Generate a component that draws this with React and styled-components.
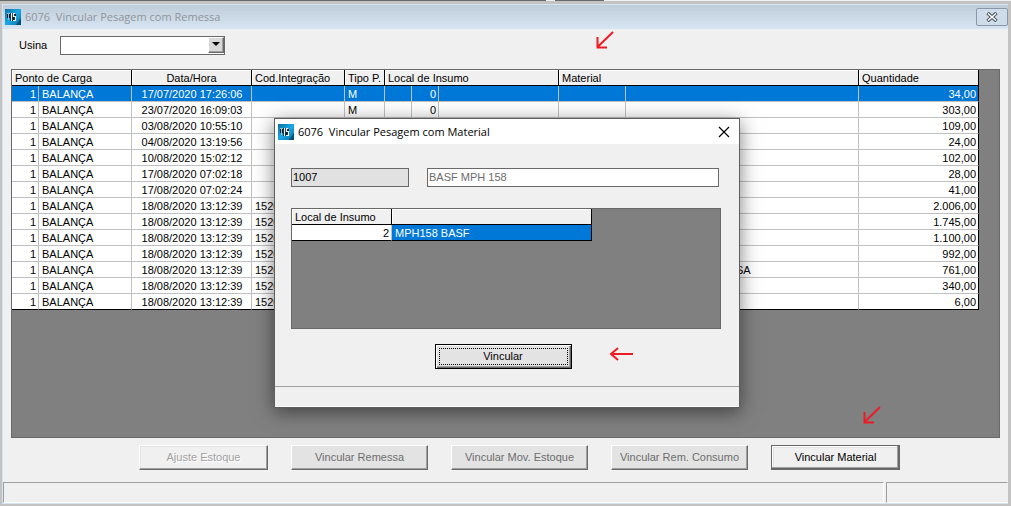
import React from "react";
import styled, { createGlobalStyle, css } from "styled-components";

const GlobalStyle = createGlobalStyle`
  * {
    box-sizing: border-box;
  }

  body {
    margin: 0;
    background: #c3c3c3;
    color: #000;
    font-family: "Liberation Sans", Arial, sans-serif;
    font-size: 11px;
    line-height: 13px;
  }
`;

const Desktop = styled.div`
  position: relative;
  display: flex;
  flex-direction: column;
  min-height: 100vh;
  padding: 0 3px 2px 2px;
`;

const Backdrop = styled.div`
  height: 4px;
  margin: 0 -3px 0 -2px;
  background:
    linear-gradient(#696969, #696969) 0 0 / 546px 1px no-repeat,
    linear-gradient(#696969, #696969) 555px 0 / 49px 1px no-repeat,
    linear-gradient(#f0f0f0, #f0f0f0) 0 0 / 100% 1px no-repeat,
    #c3c3c3;
`;

const Window = styled.main`
  flex: 1;
  display: flex;
  flex-direction: column;
  border: solid #d7e4f2;
  border-width: 1px 0 1px 1px;
  background: #f0f0f0;
`;

const TitleBar = styled.header`
  display: flex;
  align-items: center;
  gap: 4px;
  height: 24px;
  padding: 0 0 0 2px;
  background: linear-gradient(#bfcddb, #d7e4f2);
`;

const Title = styled.h1`
  flex: 1;
  margin: 0;
  font-family: "Open Sans", "Noto Sans", sans-serif;
  font-size: 11px;
  font-weight: 400;
  line-height: 16px;
  white-space: pre;
  color: ${(props) => (props.$active ? "#000" : "#8f959b")};
`;

const WindowClose = styled.button`
  display: flex;
  align-items: center;
  justify-content: center;
  width: 32px;
  height: 18px;
  padding: 0;
  border: 1px solid #8a97ab;
  border-radius: 2px;
  background: #cfdcea;
`;

const Filter = styled.div`
  display: flex;
  align-items: center;
  gap: 13px;
  height: 40px;
  padding: 0 16px 7px;
`;

const Combo = styled.div`
  position: relative;
  display: flex;
  width: 165px;
  height: 19px;
  border: 1px solid #696969;
  background: #fff;
`;

const Select = styled.select`
  flex: 1;
  appearance: none;
  border: 0;
  padding: 0 20px 0 4px;
  background: transparent;
  font: inherit;
`;

const ComboArrow = styled.span`
  position: absolute;
  top: 0;
  right: 0;
  display: flex;
  justify-content: center;
  width: 16px;
  height: 16px;
  padding-top: 4px;
  border: 1px solid;
  border-color: #fff #696969 #696969 #fff;
  background: #d8d8d8;
  box-shadow: inset -1px -1px 0 #a0a0a0;
  pointer-events: none;
`;

const GridPanel = styled.section`
  flex: 1;
  margin: 0 8px 0 8px;
  border: 1px solid #696969;
  background: #808080;
  overflow: hidden;
`;

const Grid = styled.table`
  width: ${(props) => props.$width}px;
  table-layout: fixed;
  border-collapse: separate;
  border-spacing: 0;
`;

const HeadCell = styled.th`
  height: 16px;
  padding: 2px 3px 0;
  border: solid #000;
  border-width: 0 1px 1px 0;
  background: #f0f0f0;
  box-shadow: inset 1px 1px 0 #fff;
  font-weight: 400;
  text-align: ${(props) => props.$align || "left"};
  white-space: nowrap;
`;

const selected = css`
  background: #0078d7;
  color: #fff;
`;

const Row = styled.tr`
  background: #fff;
  ${(props) => props.$selected && selected}
`;

const Cell = styled.td`
  height: 16px;
  padding: 2px 2px 0 ${(props) => props.$indent || 3}px;
  border: solid #c0c0c0;
  border-width: 0 1px 1px 0;
  text-align: ${(props) => props.$align || "left"};
  white-space: nowrap;
  overflow: hidden;
  ${(props) => props.$selected && selected}

  &:last-child {
    border-right-color: #000;
  }

  ${Row}:last-child > & {
    border-bottom-color: #000;
  }
`;

const Actions = styled.div`
  display: flex;
  gap: 23px;
  padding: 7px 16px 12px 136px;
`;

const Button = styled.button`
  width: ${(props) => (props.$wide ? 137 : 129)}px;
  height: 25px;
  padding: 0;
  border: 1px solid;
  border-color: #fff #696969 #696969 #fff;
  background: #e3e3e3;
  box-shadow: inset -1px -1px 0 #a0a0a0;
  color: #6d6d6d;
  font: inherit;
  white-space: nowrap;

  ${(props) =>
    props.$flat &&
    css`
      background: #f0f0f0;
      box-shadow: inset -1px -1px 0 #a0a0a0, inset 1px 1px 0 #e3e3e3;
      color: #a0a0a0;
      text-shadow: 1px 1px 0 #fff;
    `}

  ${(props) =>
    props.$primary &&
    css`
      border-color: #696969;
      background: #f0f0f0;
      box-shadow: inset -1px -1px 0 #696969, inset -2px -2px 0 #a0a0a0,
        inset 1px 1px 0 #fff, inset 2px 2px 0 #e3e3e3;
      color: #000;
    `}
`;

const StatusBar = styled.footer`
  display: flex;
  gap: 2px;
`;

const StatusPane = styled.div`
  flex: ${(props) => (props.$side ? "0 0 122px" : "1")};
  height: 21px;
  border: 1px solid;
  border-color: #a0a0a0 ${(props) => (props.$side ? "#f0f0f0" : "#fff")} #fff
    #a0a0a0;
`;

const Dialog = styled.div`
  position: absolute;
  top: 118px;
  left: 274px;
  width: 466px;
  border: 1px solid #5f5f5f;
  background: #f0f0f0;
  box-shadow: 0 4px 18px rgba(0, 0, 0, 0.5);
`;

const DialogBar = styled(TitleBar)`
  height: 25px;
  padding: 0 9px 0 3px;
  background: #fff;
`;

const DialogClose = styled.button`
  display: flex;
  padding: 0;
  border: 0;
  background: none;
`;

const DialogBody = styled.div`
  display: flex;
  flex-direction: column;
  padding: 24px 18px 17px 16px;
`;

const Fields = styled.div`
  display: grid;
  grid-template-columns: 118px 1fr;
  gap: 18px;
  padding-right: 2px;
  margin-bottom: 21px;
`;

const Field = styled.input`
  width: 100%;
  height: 19px;
  padding: 0 1px 1px;
  border: 1px solid #696969;
  border-radius: 0;
  background: ${(props) => (props.$filled ? "#e1e1e1" : "#fff")};
  color: ${(props) => (props.$filled ? "#000" : "#6d6d6d")};
  font: inherit;
`;

const InnerPanel = styled(GridPanel)`
  flex: none;
  height: 121px;
  margin: 0 0 15px;
`;

const DefaultButton = styled.button`
  align-self: center;
  width: 137px;
  height: 25px;
  margin-right: 6px;
  padding: 0;
  border: 1px solid #000;
  background: #e3e3e3;
  box-shadow: inset 1px 1px 0 #fff, inset -1px -1px 0 #696969,
    inset -2px -2px 0 #a0a0a0;
  font: inherit;
  outline: 1px dotted #000;
  outline-offset: -5px;
`;

const DialogStatus = styled.div`
  height: 21px;
  border-top: 1px solid #a0a0a0;
  border-bottom: 1px solid #fff;
`;

const Mark = styled.svg`
  position: absolute;
  top: ${(props) => props.$top}px;
  left: ${(props) => props.$left}px;
  fill: none;
  stroke: #ed1c24;
  stroke-width: 2;
`;

const AppIcon = ({ id }) => (
  <svg width="16" height="16" viewBox="0 0 16 16" aria-hidden="true">
    <defs>
      <linearGradient id={id} x1="0" y1="0" x2="1" y2="1">
        <stop offset="0" stopColor="#0b6f9f" />
        <stop offset="0.5" stopColor="#19a9e6" />
        <stop offset="1" stopColor="#0a6c9c" />
      </linearGradient>
    </defs>
    <rect width="16" height="16" fill={`url(#${id})`} />
    <path d="M11 16 16 9v7z" fill="#04507a" />
    <path d="M2 4h9v8H5V9H2z" fill="#06202e" />
    <path d="M2 4.500h3M3.500 4v7" stroke="#8fc4da" strokeWidth="1" />
    <path
      d="M6.500 4v8M10.500 4.500H8.500v3h2v4H8"
      fill="none"
      stroke="#eaf6fb"
      strokeWidth="1.200"
    />
  </svg>
);

const SlantArrow = ({ top, left }) => (
  <Mark $top={top} $left={left} width="18" height="18" viewBox="0 0 18 18">
    <path d="M17 1 1.500 16M1.500 6v10.500H11" />
  </Mark>
);

const columns = [27, 93, 120, 93, 40, 27, 27, 120, 67, 233, 120];

const rows = [
  { date: "17/07/2020 17:26:06", type: "M", place: 0, amount: "34,00" },
  { date: "23/07/2020 16:09:03", type: "M", place: 0, amount: "303,00" },
  { date: "03/08/2020 10:55:10", amount: "109,00" },
  { date: "04/08/2020 13:19:56", amount: "24,00" },
  { date: "10/08/2020 15:02:12", amount: "102,00" },
  { date: "17/08/2020 07:02:18", amount: "28,00" },
  { date: "17/08/2020 07:02:24", amount: "41,00" },
  { date: "18/08/2020 13:12:39", code: "1520", amount: "2.006,00" },
  { date: "18/08/2020 13:12:39", code: "1520", amount: "1.745,00" },
  { date: "18/08/2020 13:12:39", code: "1520", amount: "1.100,00" },
  { date: "18/08/2020 13:12:39", code: "1520", amount: "992,00" },
  { date: "18/08/2020 13:12:39", code: "1520", material: "SA", amount: "761,00" },
  { date: "18/08/2020 13:12:39", code: "1520", amount: "340,00" },
  { date: "18/08/2020 13:12:39", code: "1520", amount: "6,00" },
];

const WeighingGrid = () => (
  <Grid $width={967}>
    <colgroup>
      {columns.map((width, i) => (
        <col key={i} style={{ width }} />
      ))}
    </colgroup>
    <thead>
      <tr>
        <HeadCell colSpan={2}>Ponto de Carga</HeadCell>
        <HeadCell $align="center">Data/Hora</HeadCell>
        <HeadCell>Cod.Integração</HeadCell>
        <HeadCell>Tipo P.</HeadCell>
        <HeadCell colSpan={3}>Local de Insumo</HeadCell>
        <HeadCell colSpan={2}>Material</HeadCell>
        <HeadCell>Quantidade</HeadCell>
      </tr>
    </thead>
    <tbody>
      {rows.map((row, i) => (
        <Row key={i} $selected={i === 0}>
          <Cell $align="right">1</Cell>
          <Cell>BALANÇA</Cell>
          <Cell $align="center">{row.date}</Cell>
          <Cell>{row.code}</Cell>
          <Cell>{row.type}</Cell>
          <Cell />
          <Cell $align="right">{row.place}</Cell>
          <Cell />
          <Cell />
          <Cell $indent={row.material && 110}>{row.material}</Cell>
          <Cell $align="right">{row.amount}</Cell>
        </Row>
      ))}
    </tbody>
  </Grid>
);

const LinkDialog = () => (
  <Dialog role="dialog" aria-labelledby="dialog-title">
    <DialogBar>
      <AppIcon id="dialog-icon" />
      <Title as="h2" id="dialog-title" $active>
        {"6076  Vincular Pesagem com Material"}
      </Title>
      <DialogClose aria-label="Fechar">
        <svg width="12" height="12" viewBox="0 0 12 12">
          <path d="M1 1l10 10M11 1 1 11" stroke="#000" strokeWidth="1.200" />
        </svg>
      </DialogClose>
    </DialogBar>
    <DialogBody>
      <Fields>
        <Field aria-label="Código" defaultValue="1007" $filled readOnly />
        <Field aria-label="Material" defaultValue="BASF MPH 158" readOnly />
      </Fields>
      <InnerPanel>
        <Grid $width={300}>
          <colgroup>
            <col style={{ width: 100 }} />
            <col style={{ width: 200 }} />
          </colgroup>
          <thead>
            <tr>
              <HeadCell>Local de Insumo</HeadCell>
              <HeadCell />
            </tr>
          </thead>
          <tbody>
            <Row>
              <Cell $align="right">2</Cell>
              <Cell $selected>MPH158 BASF</Cell>
            </Row>
          </tbody>
        </Grid>
      </InnerPanel>
      <DefaultButton>Vincular</DefaultButton>
    </DialogBody>
    <DialogStatus />
  </Dialog>
);

const App = () => {
  return (
    <Desktop>
      <GlobalStyle />
      <Backdrop />
      <Window>
        <TitleBar>
          <AppIcon id="window-icon" />
          <Title>{"6076  Vincular Pesagem com Remessa"}</Title>
          <WindowClose aria-label="Fechar">
            <svg width="12" height="10" viewBox="0 0 12 10">
              <path d="M1.500 1 10.500 9M10.500 1 1.500 9" stroke="#4f5662" strokeWidth="3.600" />
              <path d="M2 1.500 10 8.500M10 1.500 2 8.500" stroke="#fff" strokeWidth="1.600" />
            </svg>
          </WindowClose>
        </TitleBar>
        <Filter>
          <label htmlFor="usina">Usina</label>
          <Combo>
            <Select id="usina" defaultValue="">
              <option value=""></option>
            </Select>
            <ComboArrow>
              <svg width="8" height="4" viewBox="0 0 8 4">
                <path d="M0 0h8L4 4z" />
              </svg>
            </ComboArrow>
          </Combo>
        </Filter>
        <GridPanel>
          <WeighingGrid />
        </GridPanel>
        <Actions>
          <Button $flat disabled>
            Ajuste Estoque
          </Button>
          <Button $wide disabled>
            Vincular Remessa
          </Button>
          <Button $wide disabled>
            Vincular Mov. Estoque
          </Button>
          <Button $wide disabled>
            Vincular Rem. Consumo
          </Button>
          <Button $primary>Vincular Material</Button>
        </Actions>
        <StatusBar>
          <StatusPane />
          <StatusPane $side />
        </StatusBar>
      </Window>
      <LinkDialog />
      <SlantArrow top={31} left={596} />
      <SlantArrow top={406} left={863} />
      <Mark $top={347} $left={609} width="25" height="14" viewBox="0 0 25 14">
        <path d="M24 7H2M9 1 2 7l7 6" />
      </Mark>
    </Desktop>
  );
};

export default App;
